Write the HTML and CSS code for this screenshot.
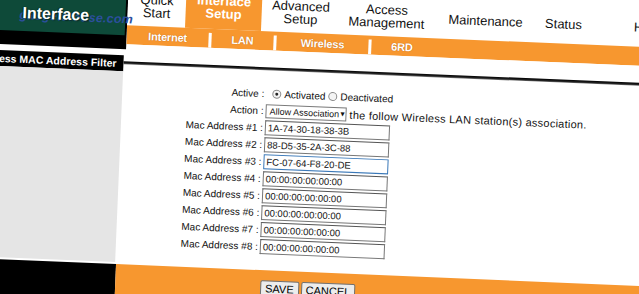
FILE: index.html
```html
<!DOCTYPE html>
<html>
<head>
<meta charset="utf-8">
<link rel="stylesheet" href="styles.css">
</head>
<body>
<div class="page">
  <div class="header">
    <div class="brand">
      <div class="logo">
        <span class="watermark">gadgetstouse.com</span>
        <span class="logo-text">Interface</span>
      </div>
    </div>
    <div class="nav">
      <div class="tabs">
        <div class="tab t-quick">Quick<br>Start</div>
        <div class="tab t-iface active">Interface<br>Setup</div>
        <div class="tab t-adv">Advanced<br>Setup</div>
        <div class="tab t-access">Access<br>Management</div>
        <div class="tab t-maint">Maintenance</div>
        <div class="tab t-status">Status</div>
        <div class="tab t-help">Help</div>
      </div>
      <div class="subtabs">
        <div class="sub s-internet">Internet</div>
        <span class="sep"></span>
        <div class="sub s-lan">LAN</div>
        <span class="sep"></span>
        <div class="sub s-wireless">Wireless</div>
        <span class="sep"></span>
        <div class="sub s-6rd">6RD</div>
      </div>
    </div>
  </div>

  <div class="body">
    <div class="side">
      <div class="side-title">Wireless MAC Address Filter</div>
      <div class="side-fill"></div>
    </div>
    <div class="main">
      <div class="rule"></div>
      <div class="form">
        <div class="label">Active :</div>
        <div class="ctrl">
          <span class="radio checked"></span><span class="opt">Activated</span>
          <span class="radio"></span><span class="opt">Deactivated</span>
        </div>

        <div class="label">Action :</div>
        <div class="ctrl">
          <span class="select">Allow Association <span class="arrow">&#9660;</span></span>
          <span class="note">the follow Wireless LAN station(s) association.</span>
        </div>

        <div class="label">Mac Address #1 :</div>
        <div class="ctrl"><span class="field">1A-74-30-18-38-3B</span></div>

        <div class="label">Mac Address #2 :</div>
        <div class="ctrl"><span class="field">88-D5-35-2A-3C-88</span></div>

        <div class="label">Mac Address #3 :</div>
        <div class="ctrl"><span class="field focus">FC-07-64-F8-20-DE</span></div>

        <div class="label">Mac Address #4 :</div>
        <div class="ctrl"><span class="field">00:00:00:00:00:00</span></div>

        <div class="label">Mac Address #5 :</div>
        <div class="ctrl"><span class="field">00:00:00:00:00:00</span></div>

        <div class="label">Mac Address #6 :</div>
        <div class="ctrl"><span class="field">00:00:00:00:00:00</span></div>

        <div class="label">Mac Address #7 :</div>
        <div class="ctrl"><span class="field">00:00:00:00:00:00</span></div>

        <div class="label">Mac Address #8 :</div>
        <div class="ctrl"><span class="field">00:00:00:00:00:00</span></div>
      </div>
    </div>
  </div>

  <div class="footer">
    <div class="foot-side"></div>
    <div class="foot-main">
      <span class="btn">SAVE</span>
      <span class="btn">CANCEL</span>
    </div>
  </div>
</div>
</body>
</html>
```

FILE: styles.css
```css
* { box-sizing: border-box; }
html, body { margin: 0; padding: 0; }
body {
  width: 639px;
  height: 294px;
  overflow: hidden;
  background: #fff;
  font-family: "Liberation Sans", Arial, sans-serif;
}

.page {
  width: 680px;
  height: 350px;
  margin: -40px 0 0 -10px;
  transform-origin: 10px 40px;
  transform: rotate(2.4deg);
  background: #fff;
  display: flex;
  flex-direction: column;
}

/* header */
.header { display: flex; align-items: flex-start; height: 84px; flex: none; }
.brand { width: 138px; height: 84px; background: #000; flex: none; }
.logo {
  width: 136px;
  height: 70px;
  background: #0e4a39;
  position: relative;
  display: flex;
  align-items: flex-end;
  padding: 0 0 9px 33px;
}
.logo-text {
  position: relative;
  color: #fff;
  font-weight: bold;
  font-size: 16px;
  line-height: 18px;
  text-shadow: 1px 1px 1px #062a20, -1px 0 1px #062a20;
}
.watermark {
  position: absolute;
  left: 30px;
  top: 46px;
  font-style: italic;
  font-weight: bold;
  font-size: 12.5px;
  line-height: 16px;
  letter-spacing: 0.2px;
  color: #2c4f9e;
}

.nav { flex: 1; min-width: 0; overflow: hidden; }
.tabs { display: flex; height: 60px; background: #fff; }
.tab {
  flex: none;
  display: flex;
  align-items: center;
  justify-content: center;
  text-align: center;
  padding-top: 20px;
  font-size: 13px;
  line-height: 13px;
  color: #111;
}
.tab.active {
  background: #f7972f;
  color: #fff;
  font-weight: bold;
  padding-top: 16px;
}
.t-quick { width: 58px; }
.t-iface { width: 76px; }
.t-adv { width: 78px; }
.t-access { width: 94px; }
.t-maint { width: 104px; }
.t-status { width: 52px; }
.t-help { width: 116px; }

.subtabs { display: flex; height: 19px; background: #f7972f; }
.sub {
  flex: none;
  display: flex;
  align-items: center;
  justify-content: center;
  color: #fff;
  font-weight: bold;
  font-size: 11px;
  letter-spacing: -0.2px;
  text-shadow: 0 0 1px #b0560a;
}
.s-internet { width: 82px; }
.s-lan { width: 62px; }
.s-wireless { width: 92px; }
.s-6rd { width: 61px; }
.sep { flex: none; width: 3px; background: #fff; margin-top: 4px; }

/* body */
.body { display: flex; height: 207px; margin-top: 6px; flex: none; }
.side { width: 136px; flex: none; display: flex; flex-direction: column; }
.side-title {
  height: 16px;
  background: #000;
  color: #fff;
  font-weight: bold;
  font-size: 10.5px;
  display: flex;
  align-items: center;
  justify-content: flex-end;
  white-space: nowrap;
  padding-right: 7px;
  overflow: hidden;
}
.side-fill { flex: 1; background: #e5e5e5; }
.main { flex: 1; padding-top: 6px; }
.rule { height: 3px; background: linear-gradient(#000, #222 60%, #777); }

.form {
  margin-top: 15px;
  display: grid;
  grid-template-columns: 142px auto;
  grid-auto-rows: 17px;
  column-gap: 2px;
  align-items: center;
  font-size: 10px;
  color: #111;
}
.label { text-align: right; white-space: nowrap; }
.ctrl { display: flex; align-items: center; white-space: nowrap; }

.radio {
  flex: none;
  width: 9px;
  height: 9px;
  border: 1px solid #8a8a8a;
  border-radius: 50%;
  background: #f4f4f4;
  margin: 0 3px 0 6px;
  display: flex;
  align-items: center;
  justify-content: center;
}
.radio.checked::after {
  content: "";
  width: 3px;
  height: 3px;
  border-radius: 50%;
  background: #222;
}
.opt { font-size: 10px; }
.opt + .radio { margin-left: 3px; }

.select {
  display: inline-flex;
  align-items: center;
  justify-content: space-between;
  width: 81px;
  height: 14px;
  border: 1px solid #7a7a7a;
  padding: 0 3px 0 3px;
  font-size: 9px;
  background: #fff;
}
.arrow { font-size: 7px; }
.note { margin-left: 3px; font-size: 11px; letter-spacing: 0.25px; }

.field {
  display: flex;
  align-items: center;
  width: 125px;
  height: 15px;
  border: 1px solid #777;
  border-top-color: #555;
  padding-left: 2px;
  font-size: 9.5px;
  background: #fff;
}
.field.focus { border-color: #3a78b8; }

/* footer */
.footer { display: flex; height: 51px; margin-top: 2px; flex: none; }
.foot-side { width: 137px; background: #000; flex: none; }
.foot-main {
  flex: 1;
  background: #f7972f;
  display: flex;
  align-items: flex-start;
  gap: 2px;
  padding: 10px 0 0 145px;
}
.btn {
  display: inline-block;
  background: #ececec;
  border: 1px solid #707070;
  border-radius: 2px;
  font-size: 11px;
  line-height: 15px;
  padding: 0 4px;
  color: #000;
}
```
